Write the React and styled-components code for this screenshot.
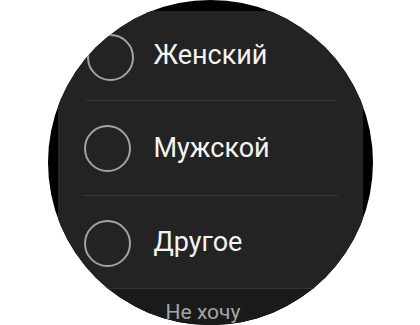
import React from 'react';
import styled, { createGlobalStyle } from 'styled-components';

const GlobalStyle = createGlobalStyle`
    html, body {
        margin: 0;
        padding: 0;
        background: #ffffff;
    }
    body {
        font-family: Roboto, "Noto Sans", "Liberation Sans", sans-serif;
    }
`;

const Watch = styled.div`
    width: 325px;
    height: 325px;
    margin: 0 auto;
    border-radius: 50%;
    background: #000000;
    overflow: hidden;
    box-sizing: border-box;
    padding: 11px 10px 0;
    display: flex;
`;

const Screen = styled.div`
    flex: 1;
    background: #232323;
    display: flex;
    flex-direction: column;
`;

const Row = styled.div`
    height: ${props => props.height}px;
    flex-shrink: 0;
    display: grid;
    grid-template-columns: 96px 1fr;
    align-items: center;
`;

const Radio = styled.div`
    width: 43px;
    height: 43px;
    border: 2px solid #a3a3a3;
    border-radius: 50%;
    margin-left: ${props => props.indent}px;
    margin-top: ${props => props.shift || 0}px;
`;

const Label = styled.span`
    color: #f4f4f4;
    font-size: 27px;
    line-height: 1;
`;

const Divider = styled.div`
    height: 1px;
    flex-shrink: 0;
    background: #383838;
    margin: 0 ${props => props.inset}px;
`;

const Footer = styled.div`
    flex: 1;
    background: #1a1a1a;
    border-top: 1px solid #333333;
    display: flex;
    justify-content: center;
    padding: 11px 14px 0 0;
`;

const FooterText = styled.span`
    color: #a6a6a6;
    font-size: 21px;
    line-height: 1.2;
`;

const options = [
    { label: 'Женский', height: 89, indent: 29, shift: 3, inset: 28 },
    { label: 'Мужской', height: 94, indent: 26, shift: 0, inset: 25 },
    { label: 'Другое', height: 92, indent: 26, shift: 2 },
];

export default function App() {
    return (
        <>
            <GlobalStyle />
            <Watch>
                <Screen>
                    {options.map(opt => (
                        <React.Fragment key={opt.label}>
                            <Row height={opt.height}>
                                <Radio indent={opt.indent} shift={opt.shift} />
                                <Label>{opt.label}</Label>
                            </Row>
                            {opt.inset && <Divider inset={opt.inset} />}
                        </React.Fragment>
                    ))}
                    <Footer>
                        <FooterText>Не хочу</FooterText>
                    </Footer>
                </Screen>
            </Watch>
        </>
    );
}
